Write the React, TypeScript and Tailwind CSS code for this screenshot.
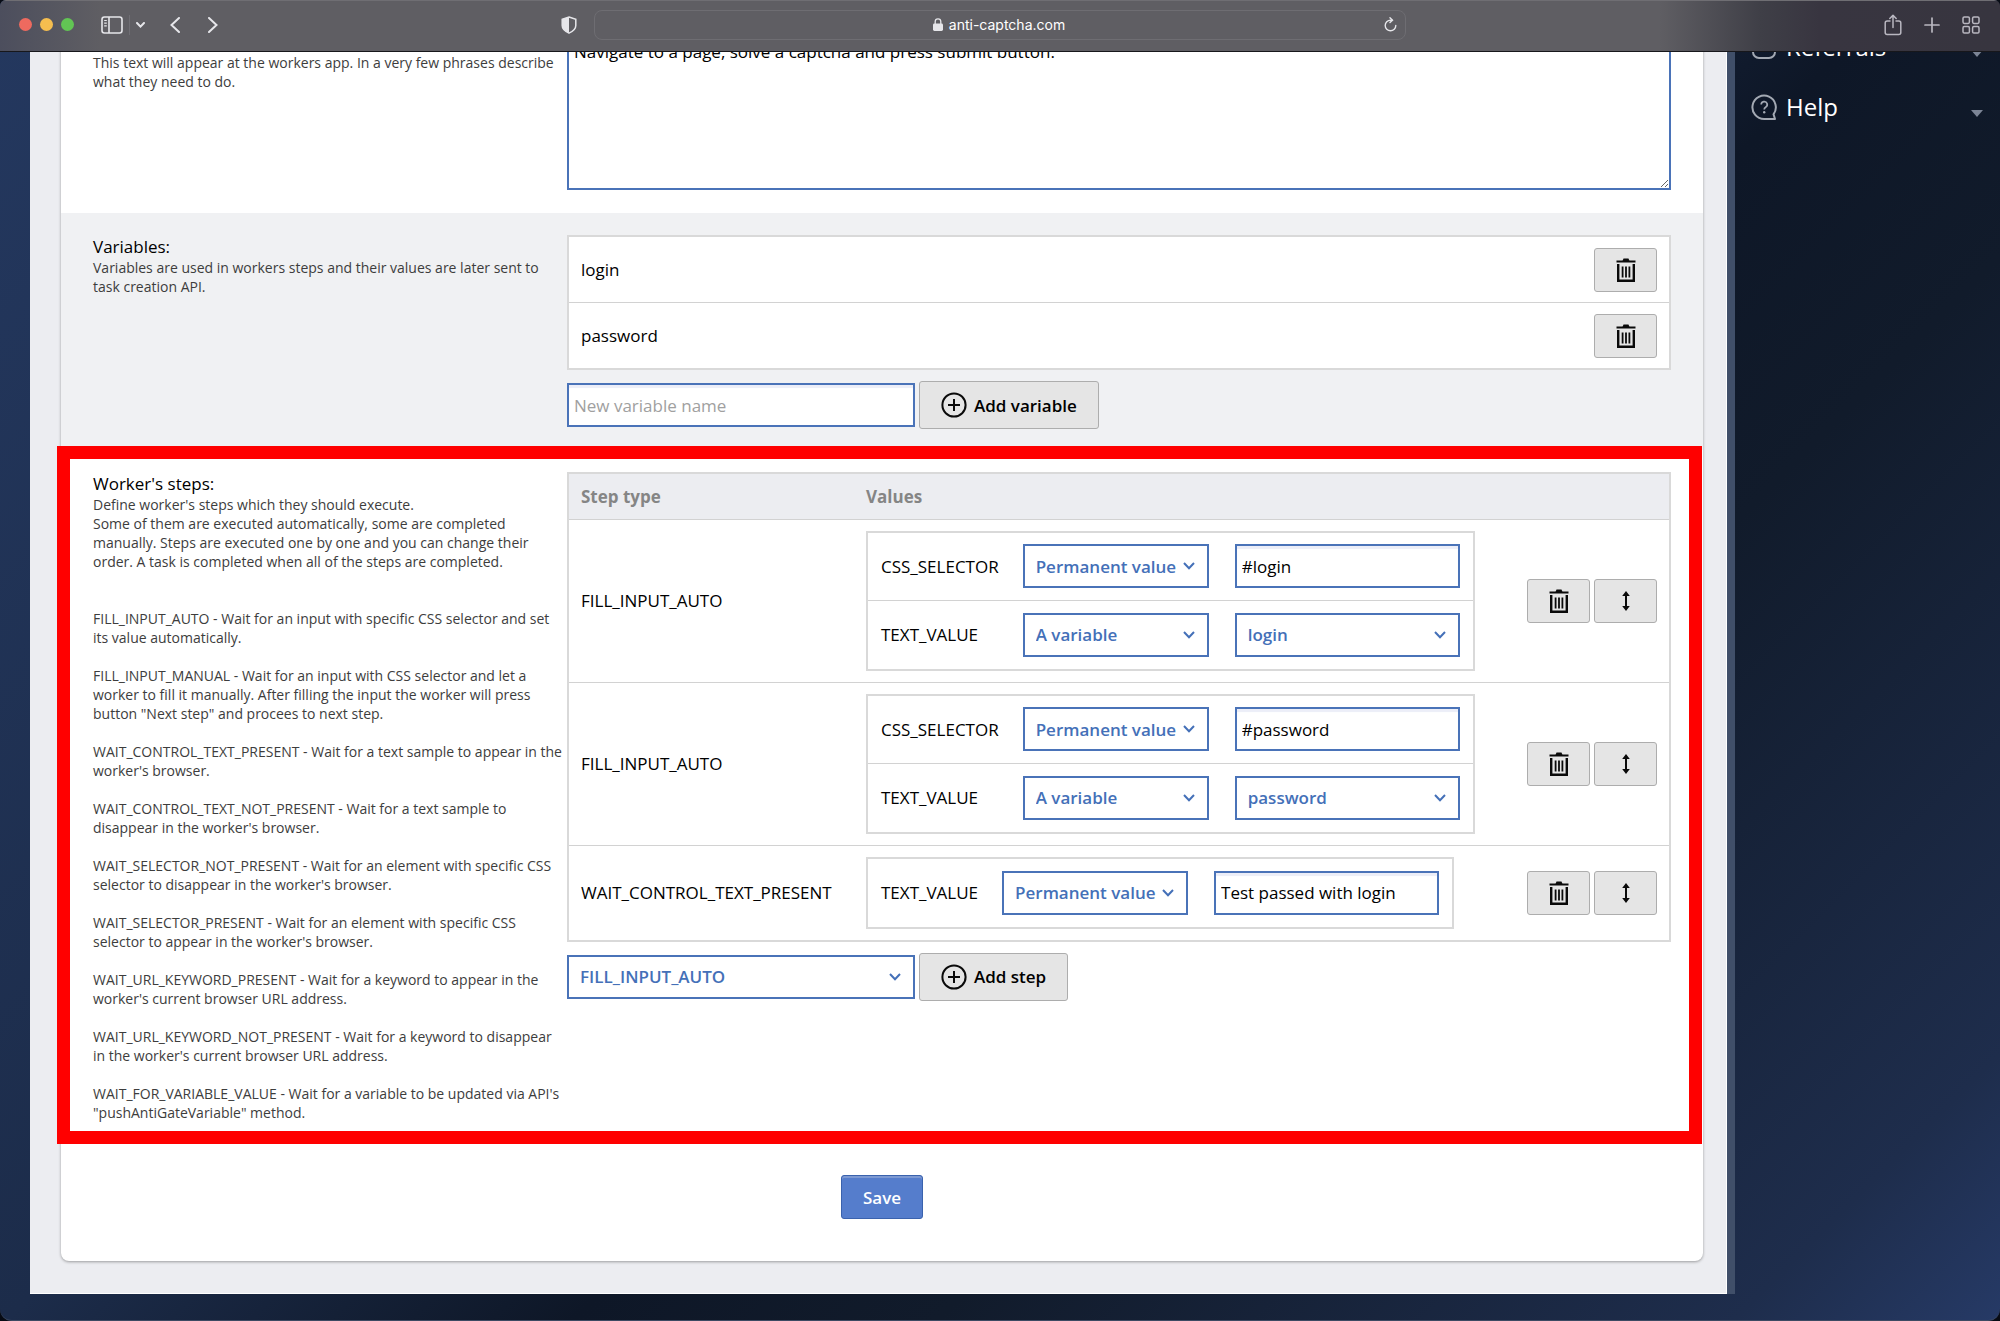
import { useState } from "react";
import type { ReactNode } from "react";

type StepValue = {
  name: string;
  mode: "Permanent value" | "A variable";
  value: string;
};

type Step = {
  id: number;
  type: string;
  values: StepValue[];
};

const initialSteps: Step[] = [
  {
    id: 1,
    type: "FILL_INPUT_AUTO",
    values: [
      { name: "CSS_SELECTOR", mode: "Permanent value", value: "#login" },
      { name: "TEXT_VALUE", mode: "A variable", value: "login" },
    ],
  },
  {
    id: 2,
    type: "FILL_INPUT_AUTO",
    values: [
      { name: "CSS_SELECTOR", mode: "Permanent value", value: "#password" },
      { name: "TEXT_VALUE", mode: "A variable", value: "password" },
    ],
  },
  {
    id: 3,
    type: "WAIT_CONTROL_TEXT_PRESENT",
    values: [
      {
        name: "TEXT_VALUE",
        mode: "Permanent value",
        value: "Test passed with login",
      },
    ],
  },
];

const stepHelp = [
  "FILL_INPUT_AUTO - Wait for an input with specific CSS selector and set its value automatically.",
  'FILL_INPUT_MANUAL - Wait for an input with CSS selector and let a worker to fill it manually. After filling the input the worker will press button "Next step" and procees to next step.',
  "WAIT_CONTROL_TEXT_PRESENT - Wait for a text sample to appear in the worker's browser.",
  "WAIT_CONTROL_TEXT_NOT_PRESENT - Wait for a text sample to disappear in the worker's browser.",
  "WAIT_SELECTOR_NOT_PRESENT - Wait for an element with specific CSS selector to disappear in the worker's browser.",
  "WAIT_SELECTOR_PRESENT - Wait for an element with specific CSS selector to appear in the worker's browser.",
  "WAIT_URL_KEYWORD_PRESENT - Wait for a keyword to appear in the worker's current browser URL address.",
  "WAIT_URL_KEYWORD_NOT_PRESENT - Wait for a keyword to disappear in the worker's current browser URL address.",
  "WAIT_FOR_VARIABLE_VALUE - Wait for a variable to be updated via API's \"pushAntiGateVariable\" method.",
];

const stepTypes = stepHelp.map((text) => text.split(" - ")[0]);

function TrashIcon() {
  return (
    <svg width="20" height="24" viewBox="0 0 20 24" fill="none" stroke="#0a0a0a" aria-hidden="true">
      <path d="M0.5 3.5h19" strokeWidth="2" />
      <path d="M6.5 3l1-2.5h5l1 2.5z" fill="#0a0a0a" stroke="none" />
      <path d="M2.2 6v16.8h15.6V6" strokeWidth="2.4" />
      <path d="M6.6 8.5v11M10 8.5v11M13.4 8.5v11" strokeWidth="1.8" />
    </svg>
  );
}

function MoveIcon() {
  return (
    <svg width="8" height="20" viewBox="0 0 8 20" aria-hidden="true">
      <path d="M4 3v14" stroke="#0a0a0a" strokeWidth="2" />
      <path d="M4 0l3.8 5H0.2zM4 20l3.8-5H0.2z" fill="#0a0a0a" />
    </svg>
  );
}

function PlusCircleIcon() {
  return (
    <svg width="26" height="26" viewBox="0 0 26 26" fill="none" stroke="#0a0a0a" strokeWidth="2" aria-hidden="true">
      <circle cx="13" cy="13" r="11.6" />
      <path d="M13 7v12M7 13h12" />
    </svg>
  );
}

function IconButton({ label, onClick, children }: { label: string; onClick?: () => void; children: ReactNode }) {
  return (
    <button
      type="button"
      aria-label={label}
      onClick={onClick}
      className="flex h-11 w-[63px] items-center justify-center rounded-[3px] border border-[#adadad] bg-[#e5e5e5]"
    >
      {children}
    </button>
  );
}

function AddButton({ onClick, children }: { onClick?: () => void; children: ReactNode }) {
  return (
    <button
      type="button"
      onClick={onClick}
      className="flex h-12 items-center gap-[7px] rounded-[3px] border border-[#adadad] bg-[#e5e5e5] px-[21px] font-semibold"
    >
      <PlusCircleIcon />
      {children}
    </button>
  );
}

function SelectBox({
  label,
  options,
  value,
  onChange,
  className,
}: {
  label: string;
  options: string[];
  value: string;
  onChange: (v: string) => void;
  className: string;
}) {
  return (
    <div className={`relative h-11 ${className}`}>
      <select
        aria-label={label}
        value={value}
        onChange={(e) => onChange(e.target.value)}
        className="h-full w-full appearance-none border-2 border-[#4a73b8] bg-white pl-[11px] font-semibold text-[#4470b8]"
      >
        {options.map((option) => (
          <option key={option}>{option}</option>
        ))}
      </select>
      <svg
        className="pointer-events-none absolute top-[18px] right-3.5"
        width="12"
        height="8"
        viewBox="0 0 12 8"
        fill="none"
        stroke="#4470b8"
        strokeWidth="2"
        aria-hidden="true"
      >
        <path d="M1 1l5 5.2L11 1" />
      </svg>
    </div>
  );
}

const textInput =
  "h-11 border-2 border-[#4a73b8] bg-white px-[5px] placeholder:text-[#a0a0a0] shadow-[inset_0_3px_1px_#eceef8]";

function BrowserBar() {
  return (
    <header className="relative z-10 flex h-13 items-center border-t border-b border-t-[#6f6e73] border-b-[#17171b] bg-[linear-gradient(90deg,#4c4e5d_0%,#5f5e63_5%,#5f5e63_83%,#3f3f47_88%,#383540_91%,#37353f_100%)] pb-[3px] text-[#e6e6ea]">
      <div className="flex flex-1 items-center pl-[19px]">
        <div className="flex gap-2">
          <span className="size-[13px] rounded-full bg-[#ee6a5f]" />
          <span className="size-[13px] rounded-full bg-[#f5be4f]" />
          <span className="size-[13px] rounded-full bg-[#62c554]" />
        </div>
        <button type="button" aria-label="Sidebar" className="ml-[27px] flex items-center">
          <svg width="22" height="18" viewBox="0 0 22 18" fill="none" stroke="currentColor" strokeWidth="1.6">
            <rect x="1" y="1" width="20" height="16" rx="2.4" />
            <path d="M8 1v16" />
            <path d="M3.2 4.5h2.6M3.2 7.2h2.6M3.2 9.9h2.6" strokeWidth="1.2" />
          </svg>
        </button>
        <span className="ml-1.5 h-5 w-px bg-[#6f6e74]" />
        <button type="button" aria-label="Tab groups" className="ml-1.5">
          <svg width="9" height="6" viewBox="0 0 9 6" fill="none" stroke="currentColor" strokeWidth="2" strokeLinecap="round">
            <path d="M1 1l3.5 3.6L8 1" />
          </svg>
        </button>
        <button type="button" aria-label="Back" className="ml-[25px]">
          <svg width="10" height="16" viewBox="0 0 10 16" fill="none" stroke="currentColor" strokeWidth="2" strokeLinecap="round">
            <path d="M9 1L1.5 8L9 15" />
          </svg>
        </button>
        <button type="button" aria-label="Forward" className="ml-7">
          <svg width="10" height="16" viewBox="0 0 10 16" fill="none" stroke="currentColor" strokeWidth="2" strokeLinecap="round">
            <path d="M1 1l7.5 7L1 15" />
          </svg>
        </button>
        <button type="button" aria-label="Privacy report" className="mr-[17px] ml-auto">
          <svg width="16" height="18" viewBox="0 0 16 18">
            <path d="M8 1l6.8 2.2v6.3c0 3.4-3 5.9-6.8 7.6C4.2 15.4 1.2 12.9 1.2 9.500V3.2z" fill="none" stroke="currentColor" strokeWidth="1.5" />
            <path d="M8 1v16C4.2 15.4 1.2 12.9 1.2 9.500V3.2z" fill="currentColor" />
          </svg>
        </button>
      </div>

      <div className="flex h-[30px] w-[812px] shrink items-center rounded-lg border border-[#6e6d72] px-2">
        <div className="flex flex-1 items-center justify-center gap-1.5 pl-3 font-[Inter,sans-serif] text-sm text-white">
          <svg width="10" height="13" viewBox="0 0 10 13" aria-hidden="true">
            <rect x="0" y="5.5" width="10" height="7.5" rx="1.4" fill="#e6e6ea" />
            <path d="M2.2 6V3.6a2.8 2.8 0 0 1 5.6 0V6" fill="none" stroke="#e6e6ea" strokeWidth="1.3" />
          </svg>
          anti-captcha.com
        </div>
        <button type="button" aria-label="Reload">
          <svg width="13" height="15" viewBox="0 0 13 15" fill="none" stroke="currentColor" strokeWidth="1.4" strokeLinecap="round">
            <path d="M11.8 8.500a5.3 5.3 0 1 1-5.3-5.3h1.5" />
            <path d="M6 0.8l2.5 2.4L6 5.6" />
          </svg>
        </button>
      </div>

      <div className="flex flex-1 items-center justify-end gap-[22px] pr-5 text-[#b9b7c0]">
        <button type="button" aria-label="Share">
          <svg width="18" height="22" viewBox="0 0 18 22" fill="none" stroke="currentColor" strokeWidth="1.5" strokeLinecap="round" strokeLinejoin="round">
            <path d="M6 7H3.2A2 2 0 0 0 1.2 9v9.500a2 2 0 0 0 2 2h11.6a2 2 0 0 0 2-2V9a2 2 0 0 0-2-2H12" />
            <path d="M9 13.5V1.5M5.8 4.5L9 1.4l3.2 3.1" />
          </svg>
        </button>
        <button type="button" aria-label="New tab">
          <svg width="16" height="16" viewBox="0 0 16 16" stroke="currentColor" strokeWidth="1.7" strokeLinecap="round">
            <path d="M8 1v14M1 8h14" />
          </svg>
        </button>
        <button type="button" aria-label="Tab overview">
          <svg width="18" height="18" viewBox="0 0 18 18" fill="none" stroke="currentColor" strokeWidth="1.5">
            <rect x="1" y="1" width="6.4" height="6.4" rx="1.3" />
            <rect x="10.6" y="1" width="6.4" height="6.4" rx="1.3" />
            <rect x="1" y="10.6" width="6.4" height="6.4" rx="1.3" />
            <rect x="10.6" y="10.6" width="6.4" height="6.4" rx="1.3" />
          </svg>
        </button>
      </div>
    </header>
  );
}

function MenuItem({ label, children }: { label: string; children: ReactNode }) {
  return (
    <a href="#" className="flex h-15 items-center gap-2 text-2xl text-white">
      <svg width="27" height="27" viewBox="0 0 27 27" fill="none" stroke="#a3a9b3" strokeWidth="2" aria-hidden="true">
        {children}
      </svg>
      {label}
      <svg className="mt-3 ml-auto" width="12" height="7" viewBox="0 0 12 7" aria-hidden="true">
        <path d="M0 0h12L6 7z" fill="#7c8596" />
      </svg>
    </a>
  );
}

function Sidebar() {
  return (
    <nav className="w-[265px] shrink-0 pt-[9px] pr-[17px] pl-4">
      <MenuItem label="Referrals">
        <rect x="2" y="2" width="22" height="22" rx="6" />
        <path d="M9 13l4 5 4-5z" fill="#a3a9b3" stroke="none" />
      </MenuItem>
      <MenuItem label="Help">
        <path d="M24 25H13.2A11.7 11.7 0 1 1 22.5 20.3z" strokeLinejoin="round" />
        <path d="M10.2 10.600a3 3 0 1 1 4.4 2.6c-1 .6-1.4 1.1-1.4 2.3" strokeWidth="1.7" />
        <circle cx="13.2" cy="18.3" r="1.2" fill="#a3a9b3" stroke="none" />
      </MenuItem>
    </nav>
  );
}

function Field({
  title,
  help,
  shaded,
  highlighted,
  children,
}: {
  title?: string;
  help: ReactNode;
  shaded?: boolean;
  highlighted?: boolean;
  children: ReactNode;
}) {
  return (
    <section
      className={`relative grid grid-cols-[472px_minmax(0,1fr)] gap-x-0.5 px-8 pt-[22px] pb-[21px] ${
        shaded ? "bg-[#f0f1f3]" : ""
      }`}
    >
      <div>
        <h2 className="min-h-[23px]">{title}</h2>
        <div className="text-sm leading-[19px] text-[#3d3d3d]">{help}</div>
      </div>
      <div>{children}</div>
      {highlighted && (
        <div className="pointer-events-none absolute -top-1 right-px -bottom-px -left-1 border-[13px] border-[#ff0000]" />
      )}
    </section>
  );
}

export default function App() {
  const [instructions, setInstructions] = useState(
    "Navigate to a page, solve a captcha and press submit button."
  );
  const [variables, setVariables] = useState(["login", "password"]);
  const [newVariable, setNewVariable] = useState("");
  const [steps, setSteps] = useState(initialSteps);
  const [newType, setNewType] = useState("FILL_INPUT_AUTO");

  const addVariable = () => {
    if (!newVariable) return;
    setVariables([...variables, newVariable]);
    setNewVariable("");
  };

  const addStep = () => {
    setSteps([
      ...steps,
      {
        id: Date.now(),
        type: newType,
        values: [{ name: "TEXT_VALUE", mode: "Permanent value", value: "" }],
      },
    ]);
  };

  const updateValue = (id: number, index: number, patch: Partial<StepValue>) => {
    setSteps(
      steps.map((s) =>
        s.id === id
          ? { ...s, values: s.values.map((v, i) => (i === index ? { ...v, ...patch } : v)) }
          : s
      )
    );
  };

  return (
    <div className="min-h-screen bg-[#070b14] font-['Open_Sans',sans-serif] text-[17px] leading-[23px] text-black">
      <div className="flex min-h-screen flex-col overflow-hidden rounded-t-md rounded-b-xl border-b border-[#3c4a63] bg-[linear-gradient(135deg,#24385f_0%,#1c2c4a_40%,#0e1727_57%,#111b2b_68%,#1e2d4c_92%,#263a66_100%)]">
        <BrowserBar />
        <div className="flex flex-1 overflow-hidden pb-[26px] pl-[30px]">
          <div className="-mt-11 flex flex-1 border-r-8 border-[#404f69]">
            <main className="flex-1 border-r border-b border-white bg-[#ecedf1] pr-[23px] pb-[30px] pl-[31px]">
              <div className="rounded-b-lg bg-white shadow-[0_1px_3px_rgba(0,0,0,0.35)]">
                <Field help="This text will appear at the workers app. In a very few phrases describe what they need to do.">
                  <textarea
                    aria-label="Instructions"
                    value={instructions}
                    onChange={(e) => setInstructions(e.target.value)}
                    className="mb-0.5 block h-40 w-full border-2 border-[#4a73b8] px-[5px] pt-2"
                  />
                </Field>

                <Field
                  shaded
                  title="Variables:"
                  help="Variables are used in workers steps and their values are later sent to task creation API."
                >
                  <ul className="divide-y divide-[#d2d2d2] border-2 border-[#d9d9d9] bg-white">
                    {variables.map((name) => (
                      <li key={name} className="flex h-[65px] items-center justify-between px-3 not-last:h-[66px]">
                        {name}
                        <IconButton
                          label={`Delete ${name}`}
                          onClick={() => setVariables(variables.filter((v) => v !== name))}
                        >
                          <TrashIcon />
                        </IconButton>
                      </li>
                    ))}
                  </ul>
                  <div className="mt-[11px] flex items-center gap-1">
                    <input
                      aria-label="New variable name"
                      placeholder="New variable name"
                      value={newVariable}
                      onChange={(e) => setNewVariable(e.target.value)}
                      className={`w-[348px] ${textInput}`}
                    />
                    <AddButton onClick={addVariable}>Add variable</AddButton>
                  </div>
                </Field>

                <Field
                  highlighted
                  title="Worker's steps:"
                  help={
                    <>
                      <p>Define worker's steps which they should execute.</p>
                      <p className="mb-[38px]">
                        Some of them are executed automatically, some are completed manually. Steps are
                        executed one by one and you can change their order. A task is completed when all of
                        the steps are completed.
                      </p>
                      {stepHelp.map((text) => (
                        <p key={text} className="mb-[19px] last:mb-0">
                          {text}
                        </p>
                      ))}
                    </>
                  }
                >
                  <div className="border-2 border-[#d9d9d9]">
                    <table className="w-full border-collapse">
                      <thead>
                        <tr className="h-[45px] border-b border-[#d2d2d2] bg-[#ecedf1] text-left text-[#858585]">
                          <th className="w-[285px] px-3">Step type</th>
                          <th className="px-3">Values</th>
                          <th aria-label="Actions" />
                        </tr>
                      </thead>
                      <tbody>
                        {steps.map((step) => (
                          <tr key={step.id} className="border-b border-[#d2d2d2] last:border-b-0">
                            <td className="px-3">{step.type}</td>
                            <td className="px-3 py-[11px]">
                              <table className="border-separate border-spacing-0 border-2 border-[#d9d9d9]">
                                <tbody>
                                  {step.values.map((v, i) => (
                                    <tr key={v.name} className="group h-17">
                                      <th className="border-b border-[#d2d2d2] px-[13px] text-left font-normal group-last:border-b-0">
                                        {v.name}
                                      </th>
                                      <td className="border-b border-[#d2d2d2] pr-[13px] pl-[11px] group-last:border-b-0">
                                        <SelectBox
                                          label={`${v.name} source`}
                                          options={["Permanent value", "A variable"]}
                                          value={v.mode}
                                          onChange={(mode) =>
                                            updateValue(step.id, i, { mode: mode as StepValue["mode"] })
                                          }
                                          className="w-[186px]"
                                        />
                                      </td>
                                      <td className="border-b border-[#d2d2d2] px-[13px] group-last:border-b-0">
                                        {v.mode === "A variable" ? (
                                          <SelectBox
                                            label={v.name}
                                            options={variables}
                                            value={v.value}
                                            onChange={(value) => updateValue(step.id, i, { value })}
                                            className="w-[225px]"
                                          />
                                        ) : (
                                          <input
                                            aria-label={v.name}
                                            value={v.value}
                                            onChange={(e) => updateValue(step.id, i, { value: e.target.value })}
                                            className={`block w-[225px] ${textInput}`}
                                          />
                                        )}
                                      </td>
                                    </tr>
                                  ))}
                                </tbody>
                              </table>
                            </td>
                            <td className="px-3">
                              <div className="flex justify-end gap-1">
                                <IconButton
                                  label="Delete step"
                                  onClick={() => setSteps(steps.filter((s) => s.id !== step.id))}
                                >
                                  <TrashIcon />
                                </IconButton>
                                <IconButton label="Move step">
                                  <MoveIcon />
                                </IconButton>
                              </div>
                            </td>
                          </tr>
                        ))}
                      </tbody>
                    </table>
                  </div>
                  <div className="mt-[11px] flex items-center gap-1">
                    <SelectBox
                      label="Step type"
                      options={stepTypes}
                      value={newType}
                      onChange={setNewType}
                      className="w-[348px]"
                    />
                    <AddButton onClick={addStep}>Add step</AddButton>
                  </div>
                </Field>

                <div className="flex justify-center pt-8 pb-[42px]">
                  <button
                    type="button"
                    className="h-11 rounded-[3px] border border-[#3a62ad] bg-[#557dcc] px-[21px] font-semibold text-white shadow-[inset_0_2px_0_#7d99d2]"
                  >
                    Save
                  </button>
                </div>
              </div>
            </main>
          </div>
          <div className="-mt-11">
            <Sidebar />
          </div>
        </div>
      </div>
    </div>
  );
}
